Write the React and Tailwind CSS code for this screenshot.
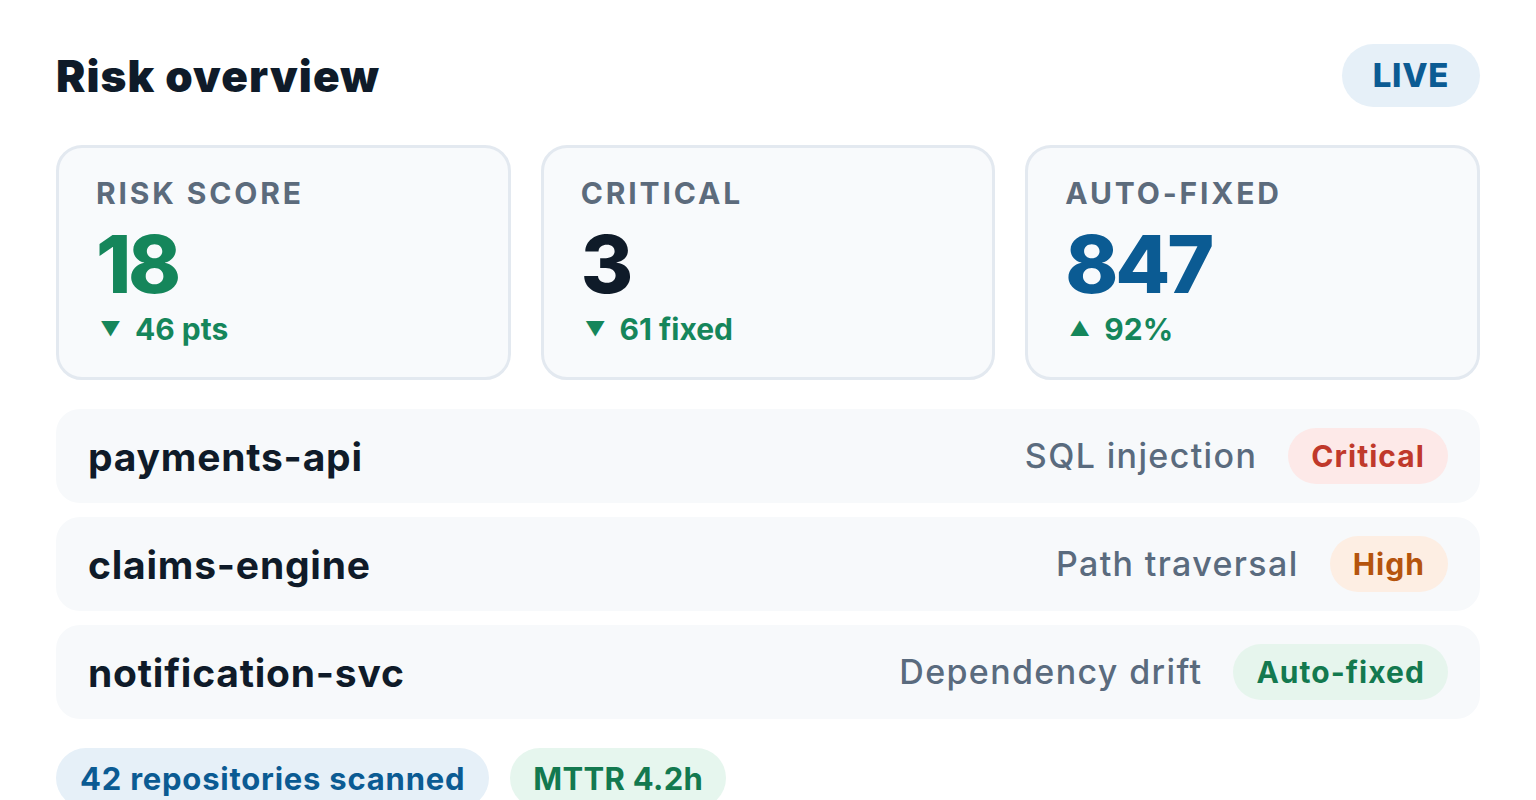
import React from "react";

const font = { fontFamily: "Inter, 'Noto Sans', sans-serif" };

function StatCard({ label, value, valueClass, arrow, delta }) {
  return (
    <div className="flex flex-col rounded-[26px] border-[3px] border-[#e3e9f0] bg-[#f8fafc] px-[37px] pt-[30px] pb-[33px]">
      <div className="text-[30px] font-bold leading-none tracking-[0.095em] text-[#5c6b7c]">{label}</div>
      <div className={`mt-[16px] text-[80px] font-extrabold leading-none tracking-[-0.04em] ${valueClass}`}>{value}</div>
      <div className="mt-[10px] flex items-center text-[30px] font-bold leading-none text-[#15865b]">
        <span className="ml-[4px] mr-[14px] text-[20px]">{arrow}</span>
        <span>{delta}</span>
      </div>
    </div>
  );
}

function Row({ name, desc, badge, badgeClass }) {
  return (
    <div className="flex h-[94px] items-center justify-between rounded-[24px] bg-[#f7f9fb] px-[32px]">
      <div className="text-[39px] font-bold leading-none tracking-[0.02em] text-[#0f1b29]">{name}</div>
      <div className="flex items-center gap-[31px]">
        <span className="text-[34px] font-medium leading-none tracking-[0.04em] text-[#5a6b7e]">{desc}</span>
        <span className={`flex h-[56px] items-center rounded-full px-[23px] text-[30px] font-bold leading-none tracking-[0.035em] ${badgeClass}`}>{badge}</span>
      </div>
    </div>
  );
}

export default function App() {
  return (
    <div style={font} className="min-h-screen bg-white px-[56px] pt-[44px]">
      <div className="flex h-[63px] items-center justify-between">
        <h1 className="text-[44px] font-black leading-none tracking-[0.025em] text-[#0f1b29]">Risk overview</h1>
        <span className="flex h-[63px] items-center rounded-full bg-[#e6f0f8] px-[31px] text-[33px] font-extrabold leading-none tracking-[0.02em] text-[#0b5b93]">LIVE</span>
      </div>

      <div className="mt-[38px] grid grid-cols-3 gap-[30px]">
        <StatCard label="RISK SCORE" value="18" valueClass="text-[#15865b]" arrow="▼" delta="46 pts" />
        <StatCard label="CRITICAL" value="3" valueClass="text-[#0f1b29]" arrow="▼" delta="61 fixed" />
        <StatCard label="AUTO-FIXED" value="847" valueClass="text-[#0b5b93]" arrow="▲" delta="92%" />
      </div>

      <div className="mt-[29px] flex flex-col gap-[14px]">
        <Row name="payments-api" desc="SQL injection" badge="Critical" badgeClass="bg-[#fde9e8] text-[#c0392b]" />
        <Row name="claims-engine" desc="Path traversal" badge="High" badgeClass="bg-[#fdeee3] text-[#b5540d]" />
        <Row name="notification-svc" desc="Dependency drift" badge="Auto-fixed" badgeClass="bg-[#e6f5ed] text-[#13794f]" />
      </div>

      <div className="mt-[29px] flex gap-[21px]">
        <span className="flex h-[60px] items-center rounded-full bg-[#e6f0f8] px-[24px] text-[31px] font-bold leading-none tracking-[0.025em] text-[#0b5b93]">42 repositories scanned</span>
        <span className="flex h-[60px] items-center rounded-full bg-[#e6f6ee] px-[23px] text-[31px] font-bold leading-none tracking-[0.01em] text-[#13794f]">MTTR 4.2h</span>
      </div>
    </div>
  );
}
